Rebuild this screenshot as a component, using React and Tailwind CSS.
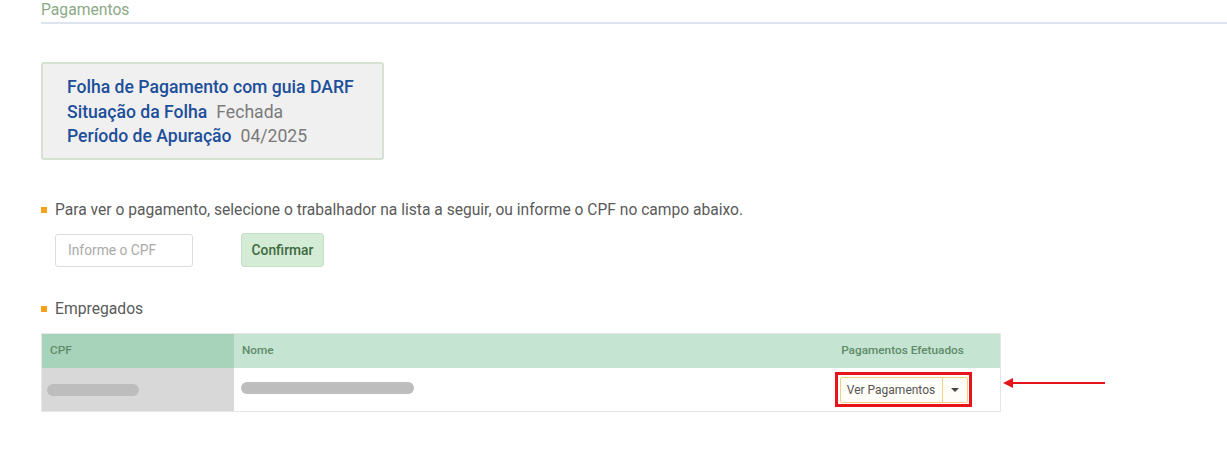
import React from "react";

export default function App() {
  return (
    <div className="w-[1227px] h-[467px] bg-white overflow-hidden relative" style={{ fontFamily: "Roboto, 'Liberation Sans', sans-serif" }}>
      <div className="pl-[41px]">
        <div className="text-[15.7px] leading-[18px] pt-[1px] text-[#8ba986] pb-[3px] border-b-2 border-[#dfe5ef]">Pagamentos</div>

        <div className="mt-[38px] w-[343px] h-[98px] bg-[#f0f0f0] border-2 border-[#d5e2d2] rounded-[3px] pl-[24px] pt-[11px] text-[17.6px] leading-[24.5px]">
          <div className="font-medium text-[#1d4f9a]">Folha de Pagamento com guia DARF</div>
          <div>
            <span className="font-medium text-[#1d4f9a]">Situação da Folha</span>
            <span className="text-[#7a7a7a] ml-[9px]">Fechada</span>
          </div>
          <div>
            <span className="font-medium text-[#1d4f9a]">Período de Apuração</span>
            <span className="text-[#7a7a7a] ml-[9px]">04/2025</span>
          </div>
        </div>

        <div className="mt-[41px] flex items-center text-[15.6px] leading-[18px] text-[#5a5a5a]">
          <span className="w-[6px] h-[6px] bg-[#f5a11c] mr-[8px]"></span>
          <span>Para ver o pagamento, selecione o trabalhador na lista a seguir, ou informe o CPF no campo abaixo.</span>
        </div>

        <div className="mt-[14px] ml-[14px] flex items-center">
          <div className="w-[138px] h-[33px] border border-[#dcdcdc] rounded-[3px] flex items-center pl-[12px] text-[13.8px] text-[#aaaaaa]">Informe o CPF</div>
          <div className="ml-[48px] w-[83px] h-[34px] bg-[#d4ebd6] border border-[#c6e0c8] rounded-[3px] flex items-center justify-center text-[13.8px] font-medium text-[#3d6a3f]">Confirmar</div>
        </div>

        <div className="mt-[33px] flex items-center text-[15.7px] leading-[18px] text-[#5a5a5a]">
          <span className="w-[6px] h-[6px] bg-[#f5a11c] mr-[8px]"></span>
          <span>Empregados</span>
        </div>

        <div className="mt-[15px] w-[960px] border border-[#e6e6e6]">
          <div className="flex h-[34px] text-[11.8px] font-medium text-[#5f8a68]">
            <div className="w-[192px] bg-[#a7d3bb] flex items-center pl-[8px]">CPF</div>
            <div className="flex-1 bg-[#c5e4d2] flex items-center pl-[8px]">Nome</div>
            <div className="w-[193px] bg-[#c5e4d2] flex items-center justify-center pr-[2px]">Pagamentos Efetuados</div>
          </div>
          <div className="flex h-[43px]">
            <div className="w-[192px] bg-[#d8d8d8] flex items-center pl-[5px] pt-[1px]">
              <div className="w-[92px] h-[12px] rounded-full bg-[#bdbdbd]"></div>
            </div>
            <div className="flex-1 bg-white flex items-center pl-[7px] pb-[4px]">
              <div className="w-[173px] h-[12px] rounded-full bg-[#bdbdbd]"></div>
            </div>
            <div className="w-[193px] bg-white flex items-center justify-center">
              <div className="w-[137px] h-[35px] border-[3px] border-[#e8141c] flex items-center justify-center">
                <div className="flex h-[26px] border border-[#f3d08a] rounded-[2px] bg-[#fffdf8]">
                  <div className="w-[102px] flex items-center justify-center text-[12px] text-[#555] border-r border-[#f3d08a]">Ver Pagamentos</div>
                  <div className="w-[24px] flex items-center justify-center">
                    <div className="w-0 h-0 border-l-[4px] border-r-[4px] border-t-[4px] border-l-transparent border-r-transparent border-t-[#444]"></div>
                  </div>
                </div>
              </div>
            </div>
          </div>
        </div>
      </div>

      <svg className="absolute left-[1000px] top-[376px]" width="110" height="14" viewBox="0 0 110 14">
        <line x1="10" y1="7" x2="105" y2="7" stroke="#e8141c" strokeWidth="2" />
        <polygon points="3,7 13,2 13,12" fill="#e8141c" />
      </svg>
    </div>
  );
}
